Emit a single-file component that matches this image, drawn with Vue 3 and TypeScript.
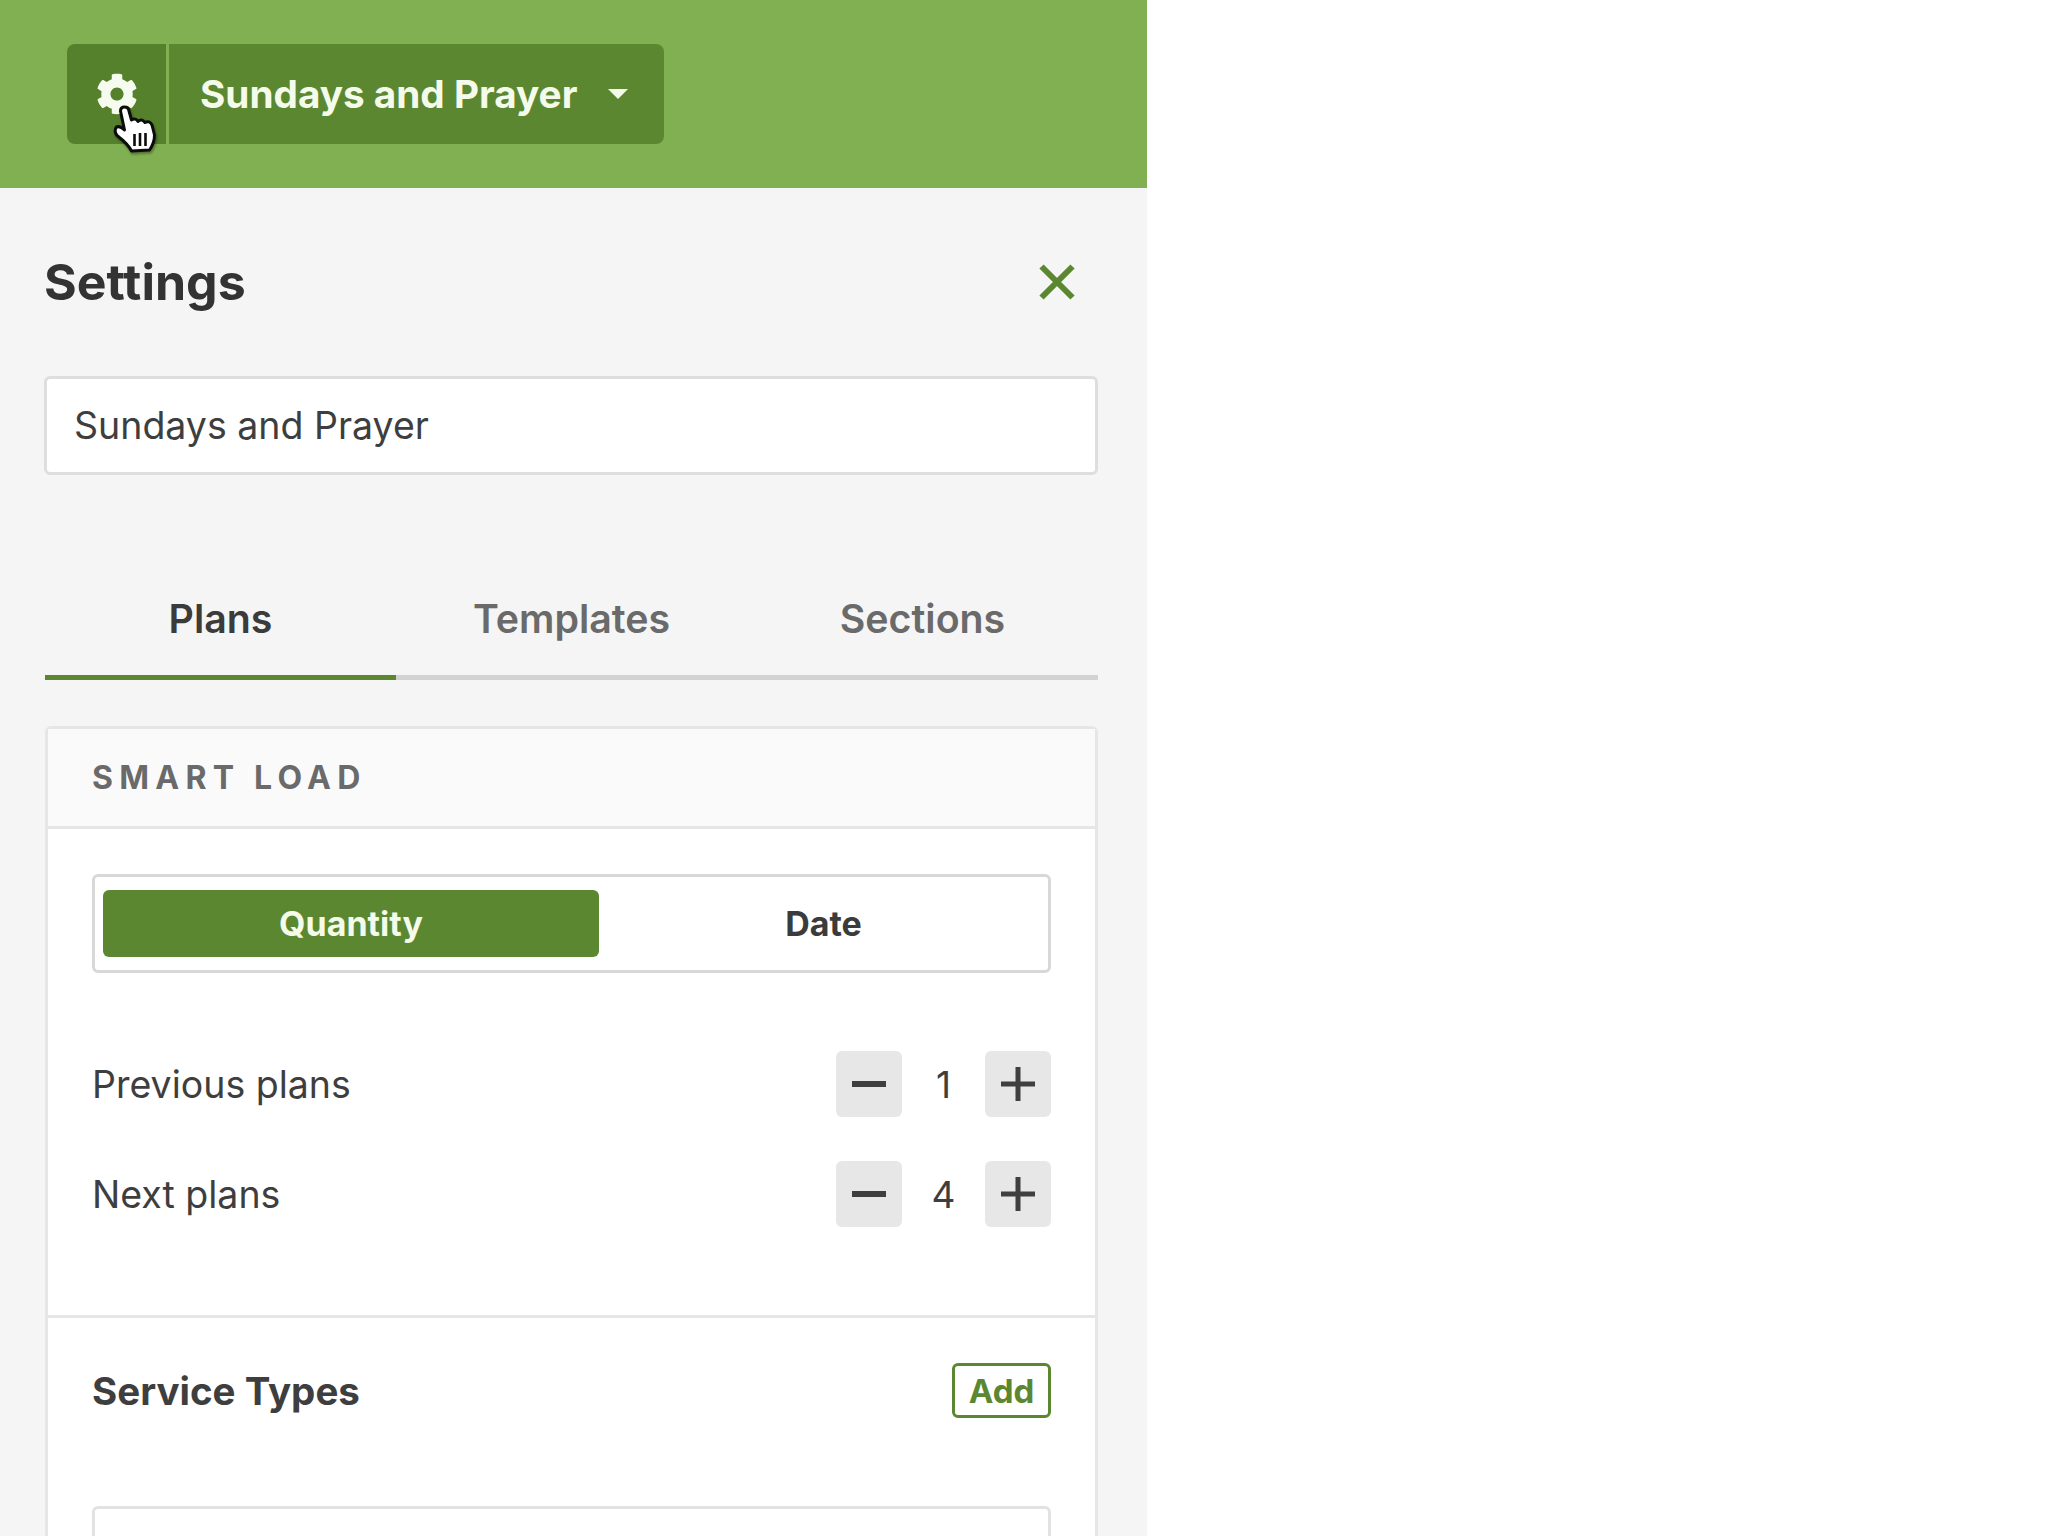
<template>
  <div class="screen">
    <header class="topbar">
      <div class="switcher">
        <button class="gear-btn" type="button" aria-label="Settings">
          <svg class="gear" viewBox="0 0 512 512" fill="currentColor">
            <path :d="cogPath" />
          </svg>
        </button>
        <button class="name-btn" type="button">
          <span>Sundays and Prayer</span>
          <i class="caret"></i>
        </button>
        <!-- mouse pointer sits on top of the gear button -->
        <svg class="pointer" viewBox="0 0 42 46">
          <path
            d="M6.500 5Q6.500 1 10.500 1T15 5L17.500 14Q21.500 11.500 24 15.500Q27.500 12 31 16.500Q35.500 14 38 19L40.500 29Q40.500 37 35.500 44L17.500 45Q14 38 3 29.500Q-.5 25 2.500 21Q6 19.500 10.500 24Z"
            fill="#fff"
            stroke="#0c0c0c"
            stroke-width="3"
            stroke-linejoin="round"
          />
          <path d="M20.500 28V40M26 27V40M31.500 27V40" stroke="#0c0c0c" stroke-width="2.600" fill="none" />
        </svg>
      </div>
    </header>

    <main class="panel">
      <div class="title-row">
        <h1>Settings</h1>
        <svg class="close" viewBox="0 0 36 36" fill="none">
          <path d="M2.500 2.500 33.500 33.500M33.500 2.500 2.500 33.500" stroke="currentColor" stroke-width="6" />
        </svg>
      </div>

      <input class="name-input" type="text" value="Sundays and Prayer" />

      <nav class="tabs">
        <a
          v-for="tab in tabs"
          :key="tab"
          class="tab"
          :class="{ active: tab === activeTab }"
          @click="activeTab = tab"
        >{{ tab }}</a>
      </nav>

      <section class="card">
        <div class="card-head">SMART LOAD</div>
        <div class="card-body">
          <div class="segmented">
            <button
              v-for="mode in modes"
              :key="mode"
              class="segment"
              :class="{ on: mode === activeMode }"
              type="button"
              @click="activeMode = mode"
            >{{ mode }}</button>
          </div>

          <div class="counters">
            <div v-for="row in counters" :key="row.label" class="counter-row">
              <span>{{ row.label }}</span>
              <div class="stepper">
                <button class="step" type="button" aria-label="Less" @click="row.value--">
                  <svg viewBox="0 0 34 34"><path d="M0 17H34" /></svg>
                </button>
                <span class="count">{{ row.value }}</span>
                <button class="step" type="button" aria-label="More" @click="row.value++">
                  <svg viewBox="0 0 34 34"><path class="thin" d="M0 17H34M17 0V34" /></svg>
                </button>
              </div>
            </div>
          </div>
        </div>

        <div class="service">
          <div class="service-head">
            <h2>Service Types</h2>
            <button class="add" type="button">Add</button>
          </div>
          <div class="service-box"></div>
        </div>
      </section>
    </main>
  </div>
</template>

<script setup lang="ts">
import { reactive, ref } from "vue";

const cogPath =
  "M487.4 315.7l-42.6-24.6c4.3-23.2 4.3-47 0-70.2l42.6-24.6c4.9-2.8 7.1-8.6 5.5-14-11.1-35.6-30-67.8-54.7-94.6-3.8-4.1-10-5.1-14.8-2.3L380.8 110c-17.9-15.4-38.5-27.3-60.8-35.1V25.8c0-5.6-3.9-10.5-9.4-11.7-36.7-8.2-74.3-7.8-109.2 0-5.5 1.2-9.4 6.1-9.4 11.7V75c-22.2 7.9-42.8 19.8-60.8 35.1L88.7 85.5c-4.9-2.8-11-1.9-14.8 2.3-24.7 26.7-43.6 58.9-54.7 94.6-1.7 5.4.6 11.2 5.5 14L67.3 221c-4.3 23.2-4.3 47 0 70.2l-42.6 24.6c-4.9 2.8-7.1 8.6-5.5 14 11.1 35.6 30 67.8 54.7 94.6 3.8 4.1 10 5.1 14.8 2.3l42.6-24.6c17.9 15.4 38.5 27.3 60.8 35.1v49.2c0 5.6 3.9 10.5 9.4 11.7 36.7 8.2 74.3 7.8 109.2 0 5.5-1.2 9.4-6.1 9.4-11.7v-49.2c22.2-7.9 42.8-19.8 60.8-35.1l42.6 24.6c4.9 2.8 11 1.9 14.8-2.3 24.7-26.7 43.6-58.9 54.7-94.6 1.5-5.5-.7-11.3-5.6-14.1zM256 336c-44.1 0-80-35.9-80-80s35.9-80 80-80 80 35.9 80 80-35.9 80-80 80z";

const tabs = ["Plans", "Templates", "Sections"];
const activeTab = ref("Plans");

const modes = ["Quantity", "Date"];
const activeMode = ref("Quantity");

const counters = reactive([
  { label: "Previous plans", value: 1 },
  { label: "Next plans", value: 4 },
]);
</script>

<style>
html,
body {
  background: #fff;
  overflow: hidden;
}
</style>

<style scoped>
.screen {
  width: 1147px;
  height: 1536px;
  overflow: hidden;
  background: #f5f5f5;
  color: #3e3e3e;
  font-family: Inter, "Liberation Sans", sans-serif;
}
button {
  font-family: inherit;
  border: 0;
  padding: 0;
  cursor: pointer;
}
.topbar {
  height: 188px;
  padding: 44px 0 0 67px;
  box-sizing: border-box;
  background: #81b052;
}
.switcher {
  position: relative;
  display: flex;
  width: 597px;
  height: 100px;
}
.gear-btn {
  width: 99px;
  background: #55802c;
  color: #f6fbf0;
  border-radius: 8px 0 0 8px;
  display: flex;
  align-items: center;
  justify-content: center;
}
.gear {
  width: 42px;
  height: 42px;
}
.name-btn {
  flex: 1;
  margin-left: 3px;
  padding-left: 31px;
  background: #5c8731;
  color: #f4fbea;
  border-radius: 0 8px 8px 0;
  display: flex;
  align-items: center;
  font-size: 38.7px;
  font-weight: 700;
}
.caret {
  margin-left: 31px;
  border: 10px solid transparent;
  border-top-color: #f4fbea;
  border-bottom-width: 0;
}
.pointer {
  position: absolute;
  left: 47px;
  top: 62px;
  width: 42px;
  height: 46px;
  overflow: visible;
  filter: drop-shadow(1px 2px 1px rgba(0, 0, 0, 0.35));
}
.panel {
  padding: 0 49px 0 44px;
}
.title-row {
  height: 188px;
  box-sizing: border-box;
  padding: 0 23px 1px 0;
  display: flex;
  align-items: center;
  justify-content: space-between;
}
h1 {
  margin: 0;
  color: #333;
  font-size: 50px;
  font-weight: 700;
}
.close {
  width: 36px;
  height: 36px;
  color: #5c8731;
}
.name-input {
  display: block;
  width: 100%;
  height: 99px;
  box-sizing: border-box;
  padding: 0 27px;
  background: #fff;
  border: 3px solid #dedede;
  border-radius: 6px;
  color: #3e3e3e;
  font-family: inherit;
  font-size: 37.5px;
  outline: none;
}
.tabs {
  display: grid;
  grid-template-columns: repeat(3, 1fr);
  margin: 95px 0 0 1px;
  height: 110px;
}
.tab {
  display: flex;
  align-items: center;
  justify-content: center;
  padding-bottom: 8px;
  border-bottom: 5px solid #d2d2d2;
  color: #6a6a6a;
  font-size: 39.3px;
  font-weight: 600;
  cursor: pointer;
}
.tab.active {
  color: #3b3b3b;
  border-bottom-color: #5c8731;
}
.card {
  margin-top: 46px;
  margin-left: 1px;
  background: #fff;
  border: 3px solid #e6e6e6;
  border-radius: 6px 6px 0 0;
}
.card-head {
  height: 100px;
  box-sizing: border-box;
  padding-left: 44px;
  display: flex;
  align-items: center;
  background: #fafafa;
  border-bottom: 3px solid #e6e6e6;
  color: #6a6a6a;
  font-size: 32px;
  font-weight: 700;
  letter-spacing: 0.195em;
}
.card-body {
  padding: 45px 44px 0;
  height: 489px;
  box-sizing: border-box;
  border-bottom: 3px solid #e6e6e6;
}
.segmented {
  display: grid;
  grid-template-columns: 496px 1fr;
  height: 99px;
  box-sizing: border-box;
  padding: 13px 0 13px 8px;
  border: 3px solid #d8d8d8;
  border-radius: 6px;
}
.segment {
  background: none;
  color: #3b3b3b;
  border-radius: 6px;
  font-size: 34px;
  font-weight: 700;
}
.segment.on {
  background: #5c8731;
  color: #f4fbea;
}
.counters {
  margin-top: 78px;
  display: flex;
  flex-direction: column;
  gap: 44px;
}
.counter-row {
  display: flex;
  align-items: center;
  justify-content: space-between;
  font-size: 37.5px;
}
.stepper {
  display: grid;
  grid-template-columns: 66px 83px 66px;
  align-items: center;
  text-align: center;
}
.step {
  height: 66px;
  background: #e7e7e7;
  border-radius: 6px;
  display: flex;
  align-items: center;
  justify-content: center;
}
.step svg {
  width: 34px;
  height: 34px;
}
.step path {
  stroke: #3f3f3f;
  stroke-width: 6;
  fill: none;
}
.step path.thin {
  stroke-width: 5;
}
.count {
  font-size: 37px;
}
.service {
  padding: 0 44px;
}
.service-head {
  height: 145px;
  display: flex;
  align-items: center;
  justify-content: space-between;
}
h2 {
  margin: 0;
  font-size: 38.5px;
  font-weight: 700;
}
.add {
  width: 99px;
  height: 55px;
  background: #fff;
  box-sizing: border-box;
  border: 3px solid #5c8731;
  border-radius: 6px;
  color: #5c8731;
  font-size: 33px;
  font-weight: 700;
}
.service-box {
  margin-top: 43px;
  height: 120px;
  border: 3px solid #e2e2e2;
  border-radius: 6px;
}
</style>
